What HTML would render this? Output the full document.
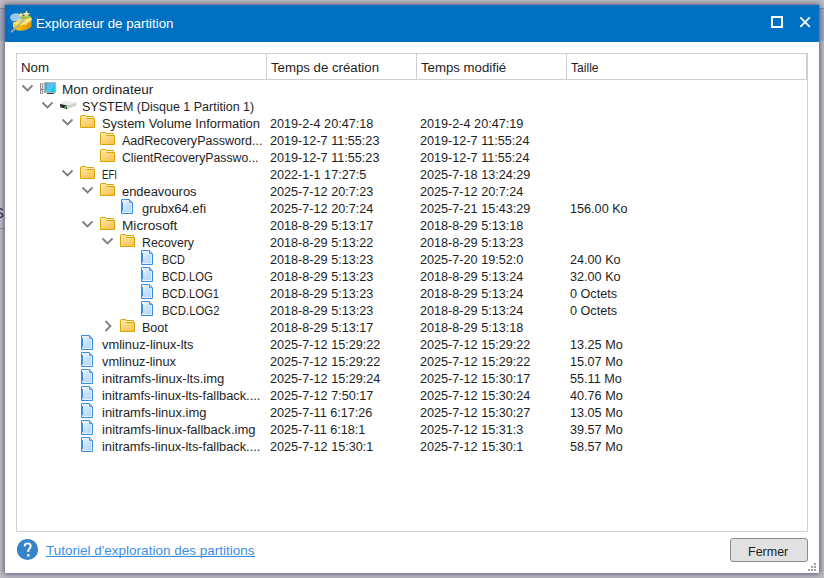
<!DOCTYPE html>
<html><head><meta charset="utf-8"><style>
html,body{margin:0;padding:0;}
body{width:824px;height:578px;position:relative;overflow:hidden;background:#bdbcc1;font-family:"Liberation Sans",sans-serif;}
.abs{position:absolute;}
.ic{position:absolute;display:block;}
.t{position:absolute;transform-origin:0 0;font-size:12.5px;line-height:17px;height:17px;white-space:pre;color:#1e1e1e;}
.n{font-size:12.65px;}
#win{position:absolute;left:5px;top:5px;width:814px;height:568px;background:#fff;box-shadow:0 0 5px 1px rgba(60,55,100,0.75);}
#title{position:absolute;left:5px;top:5px;width:814px;height:37px;background:#0071c2;}
#ttext{position:absolute;left:36px;top:15px;font-size:13.3px;line-height:17px;color:#fff;white-space:pre;}
.line{position:absolute;background:#cfcfcf;}
#link{position:absolute;left:46px;top:542px;font-size:13.5px;line-height:17px;color:#3d8ee4;white-space:pre;}
#uline{position:absolute;left:46px;top:556px;width:209px;height:1px;background:#3a8ae2;}
#btn{position:absolute;left:730px;top:538px;width:76px;height:22px;border:1px solid #8c8c8c;border-radius:3px;background:#e1e1e1;}
#btext{position:absolute;left:748px;top:544px;font-size:12.5px;line-height:17px;color:#1e1e1e;white-space:pre;}
</style></head><body>
<svg width="0" height="0" style="position:absolute">
<defs>
<linearGradient id="fg" x1="0" y1="0" x2="0.6" y2="1"><stop offset="0" stop-color="#ffecb0"/><stop offset="1" stop-color="#f9c455"/></linearGradient>
<linearGradient id="fl" x1="0" y1="0" x2="0.8" y2="1"><stop offset="0" stop-color="#ffffff"/><stop offset="0.5" stop-color="#c9e2fa"/><stop offset="1" stop-color="#b3d6f8"/></linearGradient>
<linearGradient id="scr" x1="0" y1="0" x2="1" y2="1"><stop offset="0" stop-color="#5a9fdc"/><stop offset="1" stop-color="#00d2fa"/></linearGradient>
<symbol id="folder" viewBox="0 0 15 13">
<path d="M0.5,12.5 V1.5 Q0.5,0.5 1.5,0.5 H5.5 L6.5,1.5 H13.5 V3.5 H14.5 V12.5 Z" fill="url(#fg)" stroke="#d9a300"/>
<rect x="7" y="2" width="6.5" height="1.2" fill="#fff2c8"/>
<path d="M6.5,3.5 H14" stroke="#d9a300" stroke-width="1"/>
</symbol>
<symbol id="file" viewBox="0 0 12 15">
<path d="M0.5,0.5 H8.3 L11.5,3.7 V14.5 H0.5 Z" fill="url(#fl)" stroke="#3a8ee0"/>
<path d="M2.3,1.6 H7.6 V4.4 H10.5 V13.5 H2.3" fill="none" stroke="#e6f5ff" stroke-width="0.9"/>
<path d="M1.5,3 V12" stroke="#3a8ee0" stroke-width="1"/>
<path d="M8.5,0.8 V3.6 H11.2" fill="none" stroke="#3a8ee0" stroke-width="0.9"/>
</symbol>
<symbol id="pc" viewBox="0 0 17 13">
<rect x="0" y="1" width="1" height="11" fill="#8e9196"/>
<rect x="1" y="1" width="1" height="11" fill="#d9dcdf"/>
<rect x="2" y="1" width="1" height="11" fill="#9fa3a8"/>
<rect x="3" y="1" width="1" height="11" fill="#dfe2e5"/>
<rect x="1" y="7" width="1" height="1" fill="#d05a4a"/>
<rect x="3" y="7" width="1" height="1" fill="#3ab8e0"/>
<rect x="4" y="0" width="12" height="11" fill="#b9b2a4"/>
<rect x="5" y="1" width="10" height="9" fill="url(#scr)"/>
<path d="M8,1 L15,1 L15,3 L10,10 L6,10 Z" fill="#ffffff" opacity="0.18"/>
<rect x="7" y="11" width="7" height="1" fill="#3f3f3f"/>
<rect x="5" y="10" width="1" height="1" fill="#8aea3c"/>
</symbol>
<symbol id="disk" viewBox="0 0 17 9">
<path d="M0,3 L4.7,0 L16.5,1.8 L16.5,4.6 L7,8 L0.3,6.2 Z" fill="#d0d0d0"/>
<path d="M0,3 L4.7,0 L16.5,1.8 L7,4.6 Z" fill="#ececec"/>
<path d="M0,3 L7,4.6 L7,8 L0.3,6.2 Z" fill="#262626"/>
<rect x="4.6" y="4.9" width="2" height="2" fill="#2ee33c"/>
</symbol>
</defs></svg>

<div class="abs" style="left:0;top:8px;width:824px;height:1px;background:#8d8c94"></div>
<div class="abs" style="left:0;top:9px;width:824px;height:32px;background:#a2abbd"></div>
<div class="abs" style="left:0;top:228px;width:5px;height:1px;background:#8a8a92"></div>
<div class="abs" style="left:-6px;top:204px;font-size:15px;line-height:17px;color:#2a2a3a">S</div>
<div id="win"></div>
<div id="title"></div>
<div id="ttext">Explorateur de partition</div>
<svg class="ic" style="left:0;top:0" width="40" height="40" viewBox="0 0 40 40">
<defs>
<linearGradient id="cy" x1="0" y1="0" x2="1" y2="0.3"><stop offset="0" stop-color="#ffe23a"/><stop offset="0.6" stop-color="#f2b800"/><stop offset="1" stop-color="#e09400"/></linearGradient>
<radialGradient id="st" cx="0.4" cy="0.4" r="0.7"><stop offset="0" stop-color="#fff6c0"/><stop offset="1" stop-color="#c9a020"/></radialGradient>
</defs>
<path d="M10.2,17.5 Q10,22 13.5,24 L14,18.5 Z" fill="#2f86d6"/>
<ellipse cx="16" cy="17.3" rx="5.9" ry="4" fill="#a6d2f3" opacity="0.9"/>
<path d="M21,16 L30,15.8 L31.6,18 L21.5,19.6 Z" fill="#6fd24a"/>
<path d="M13,23 L21.5,19.3 L31.6,17.8 V26.5 Q28.5,30.6 19.5,30.8 Q14.5,30 13,27 Z" fill="url(#cy)"/>
<path d="M13,23 L21.5,19.3 L31.6,17.8 L31.4,20.5 Q26,24.8 19,25.2 Q15,25 13,23 Z" fill="#ffe96a"/>
<path d="M21,11.9 L21.9,14.1 L24.2,14.3 L22.4,15.8 L23,18.1 L21,16.8 L19,18.1 L19.6,15.8 L17.8,14.3 L20.1,14.1 Z" fill="url(#st)"/>
<path d="M26.5,10.3 L27.7,13.1 L30.6,13.3 L28.4,15.1 L29.1,18 L26.5,16.4 L23.9,18 L24.6,15.1 L22.4,13.3 L25.3,13.1 Z" fill="url(#st)"/>
<path d="M19.2,17.9 L19.8,19.3 L21.3,19.4 L20.1,20.4 L20.5,21.9 L19.2,21.1 L17.9,21.9 L18.3,20.4 L17.1,19.4 L18.6,19.3 Z" fill="url(#st)"/>
<path d="M25.1,20.3 L25.9,22 L27.8,22.2 L26.4,23.4 L26.8,25.3 L25.1,24.3 L23.4,25.3 L23.8,23.4 L22.4,22.2 L24.3,22 Z" fill="#f6e08a"/><path d="M29.1,18.9 L29.6,20 L30.8,20.1 L29.9,20.9 L30.2,22.1 L29.1,21.4 L28,22.1 L28.3,20.9 L27.4,20.1 L28.6,20 Z" fill="#f6e08a"/>
<line x1="11.1" y1="32.4" x2="25.5" y2="18" stroke="#8a8a8a" stroke-width="1.7"/>
<line x1="11.3" y1="32" x2="25.2" y2="18.2" stroke="#f0f0f0" stroke-width="0.7"/>
</svg>
<svg class="ic" style="left:760px;top:8px" width="60" height="28" viewBox="760 8 60 28">
<rect x="772" y="17" width="10" height="10" fill="none" stroke="#fff" stroke-width="2"/>
<path d="M800.3,17.3 L809.8,26.8 M809.8,17.3 L800.3,26.8" stroke="#fff" stroke-width="1.7"/>
</svg>

<!-- table panel -->
<div class="line" style="left:16px;top:53px;width:792px;height:1px"></div>
<div class="line" style="left:16px;top:79px;width:791px;height:1px"></div>
<div class="line" style="left:16px;top:531px;width:792px;height:1px"></div>
<div class="line" style="left:16px;top:53px;width:1px;height:479px"></div>
<div class="line" style="left:807px;top:53px;width:1px;height:479px"></div>
<div class="line" style="left:266px;top:53px;width:1px;height:26px"></div>
<div class="line" style="left:416px;top:53px;width:1px;height:26px"></div>
<div class="line" style="left:566px;top:53px;width:1px;height:26px"></div>
<div class="line" style="left:806px;top:53px;width:1px;height:26px"></div>
<div class="t" style="left:21px;top:60px;transform:scaleX(1.0611);">Nom</div>
<div class="t" style="left:271px;top:60px;transform:scaleX(1.0574);">Temps de création</div>
<div class="t" style="left:421px;top:60px;transform:scaleX(1.0572);">Temps modifié</div>
<div class="t" style="left:571px;top:60px;transform:scaleX(0.9688);">Taille</div>

<svg class="ic" style="left:21px;top:84px" width="12" height="8" viewBox="0 0 12 8"><polyline points="1.5,1.5 6.5,6.5 11.5,1.5" fill="none" stroke="#7f7f7f" stroke-width="1.8"/></svg>
<svg class="ic" style="left:40px;top:82px" width="17" height="13" viewBox="0 0 17 13"><use href="#pc"/></svg>
<div class="t" style="left:62px;top:82px;transform:scaleX(1.0859);">Mon ordinateur</div>
<svg class="ic" style="left:41px;top:101px" width="12" height="8" viewBox="0 0 12 8"><polyline points="1.5,1.5 6.5,6.5 11.5,1.5" fill="none" stroke="#7f7f7f" stroke-width="1.8"/></svg>
<svg class="ic" style="left:60px;top:101px" width="17" height="9" viewBox="0 0 17 9"><use href="#disk"/></svg>
<div class="t" style="left:82px;top:99px;transform:scaleX(0.9995);">SYSTEM (Disque 1 Partition 1)</div>
<svg class="ic" style="left:61px;top:118px" width="12" height="8" viewBox="0 0 12 8"><polyline points="1.5,1.5 6.5,6.5 11.5,1.5" fill="none" stroke="#7f7f7f" stroke-width="1.8"/></svg>
<svg class="ic" style="left:80px;top:115px" width="15" height="13" viewBox="0 0 15 13"><use href="#folder"/></svg>
<div class="t" style="left:102px;top:116px;transform:scaleX(1.0337);">System Volume Information</div>
<div class="t n" style="left:270px;top:116px">2019-2-4 20:47:18</div>
<div class="t n" style="left:420px;top:116px">2019-2-4 20:47:19</div>
<svg class="ic" style="left:100px;top:132px" width="15" height="13" viewBox="0 0 15 13"><use href="#folder"/></svg>
<div class="t" style="left:122px;top:133px;transform:scaleX(1.0012);">AadRecoveryPassword...</div>
<div class="t n" style="left:270px;top:133px">2019-12-7 11:55:23</div>
<div class="t n" style="left:420px;top:133px">2019-12-7 11:55:24</div>
<svg class="ic" style="left:100px;top:149px" width="15" height="13" viewBox="0 0 15 13"><use href="#folder"/></svg>
<div class="t" style="left:122px;top:150px;transform:scaleX(0.9825);">ClientRecoveryPasswo...</div>
<div class="t n" style="left:270px;top:150px">2019-12-7 11:55:23</div>
<div class="t n" style="left:420px;top:150px">2019-12-7 11:55:24</div>
<svg class="ic" style="left:61px;top:169px" width="12" height="8" viewBox="0 0 12 8"><polyline points="1.5,1.5 6.5,6.5 11.5,1.5" fill="none" stroke="#7f7f7f" stroke-width="1.8"/></svg>
<svg class="ic" style="left:80px;top:166px" width="15" height="13" viewBox="0 0 15 13"><use href="#folder"/></svg>
<div class="t" style="left:102px;top:167px;transform:scaleX(0.7712);">EFI</div>
<div class="t n" style="left:270px;top:167px">2022-1-1 17:27:5</div>
<div class="t n" style="left:420px;top:167px">2025-7-18 13:24:29</div>
<svg class="ic" style="left:81px;top:186px" width="12" height="8" viewBox="0 0 12 8"><polyline points="1.5,1.5 6.5,6.5 11.5,1.5" fill="none" stroke="#7f7f7f" stroke-width="1.8"/></svg>
<svg class="ic" style="left:100px;top:183px" width="15" height="13" viewBox="0 0 15 13"><use href="#folder"/></svg>
<div class="t" style="left:122px;top:184px;transform:scaleX(1.0308);">endeavouros</div>
<div class="t n" style="left:270px;top:184px">2025-7-12 20:7:23</div>
<div class="t n" style="left:420px;top:184px">2025-7-12 20:7:24</div>
<svg class="ic" style="left:121px;top:199px" width="12" height="15" viewBox="0 0 12 15"><use href="#file"/></svg>
<div class="t" style="left:142px;top:201px;transform:scaleX(1.0348);">grubx64.efi</div>
<div class="t n" style="left:270px;top:201px">2025-7-12 20:7:24</div>
<div class="t n" style="left:420px;top:201px">2025-7-21 15:43:29</div>
<div class="t n" style="left:570px;top:201px">156.00 Ko</div>
<svg class="ic" style="left:81px;top:220px" width="12" height="8" viewBox="0 0 12 8"><polyline points="1.5,1.5 6.5,6.5 11.5,1.5" fill="none" stroke="#7f7f7f" stroke-width="1.8"/></svg>
<svg class="ic" style="left:100px;top:217px" width="15" height="13" viewBox="0 0 15 13"><use href="#folder"/></svg>
<div class="t" style="left:122px;top:218px;transform:scaleX(1.0907);">Microsoft</div>
<div class="t n" style="left:270px;top:218px">2018-8-29 5:13:17</div>
<div class="t n" style="left:420px;top:218px">2018-8-29 5:13:18</div>
<svg class="ic" style="left:101px;top:237px" width="12" height="8" viewBox="0 0 12 8"><polyline points="1.5,1.5 6.5,6.5 11.5,1.5" fill="none" stroke="#7f7f7f" stroke-width="1.8"/></svg>
<svg class="ic" style="left:120px;top:234px" width="15" height="13" viewBox="0 0 15 13"><use href="#folder"/></svg>
<div class="t" style="left:142px;top:235px;transform:scaleX(0.9848);">Recovery</div>
<div class="t n" style="left:270px;top:235px">2018-8-29 5:13:22</div>
<div class="t n" style="left:420px;top:235px">2018-8-29 5:13:23</div>
<svg class="ic" style="left:141px;top:250px" width="12" height="15" viewBox="0 0 12 15"><use href="#file"/></svg>
<div class="t" style="left:162px;top:252px;transform:scaleX(0.8678);">BCD</div>
<div class="t n" style="left:270px;top:252px">2018-8-29 5:13:23</div>
<div class="t n" style="left:420px;top:252px">2025-7-20 19:52:0</div>
<div class="t n" style="left:570px;top:252px">24.00 Ko</div>
<svg class="ic" style="left:141px;top:267px" width="12" height="15" viewBox="0 0 12 15"><use href="#file"/></svg>
<div class="t" style="left:162px;top:269px;transform:scaleX(0.9029);">BCD.LOG</div>
<div class="t n" style="left:270px;top:269px">2018-8-29 5:13:23</div>
<div class="t n" style="left:420px;top:269px">2018-8-29 5:13:24</div>
<div class="t n" style="left:570px;top:269px">32.00 Ko</div>
<svg class="ic" style="left:141px;top:284px" width="12" height="15" viewBox="0 0 12 15"><use href="#file"/></svg>
<div class="t" style="left:162px;top:286px;transform:scaleX(0.9017);">BCD.LOG1</div>
<div class="t n" style="left:270px;top:286px">2018-8-29 5:13:23</div>
<div class="t n" style="left:420px;top:286px">2018-8-29 5:13:24</div>
<div class="t n" style="left:570px;top:286px">0 Octets</div>
<svg class="ic" style="left:141px;top:301px" width="12" height="15" viewBox="0 0 12 15"><use href="#file"/></svg>
<div class="t" style="left:162px;top:303px;transform:scaleX(0.9096);">BCD.LOG2</div>
<div class="t n" style="left:270px;top:303px">2018-8-29 5:13:23</div>
<div class="t n" style="left:420px;top:303px">2018-8-29 5:13:24</div>
<div class="t n" style="left:570px;top:303px">0 Octets</div>
<svg class="ic" style="left:104px;top:320px" width="8" height="12" viewBox="0 0 8 12"><polyline points="1.5,1 6.5,6 1.5,11" fill="none" stroke="#7f7f7f" stroke-width="1.8"/></svg>
<svg class="ic" style="left:120px;top:319px" width="15" height="13" viewBox="0 0 15 13"><use href="#folder"/></svg>
<div class="t" style="left:142px;top:320px;transform:scaleX(1.0034);">Boot</div>
<div class="t n" style="left:270px;top:320px">2018-8-29 5:13:17</div>
<div class="t n" style="left:420px;top:320px">2018-8-29 5:13:18</div>
<svg class="ic" style="left:81px;top:335px" width="12" height="15" viewBox="0 0 12 15"><use href="#file"/></svg>
<div class="t" style="left:102px;top:337px;transform:scaleX(1.0292);">vmlinuz-linux-lts</div>
<div class="t n" style="left:270px;top:337px">2025-7-12 15:29:22</div>
<div class="t n" style="left:420px;top:337px">2025-7-12 15:29:22</div>
<div class="t n" style="left:570px;top:337px">13.25 Mo</div>
<svg class="ic" style="left:81px;top:352px" width="12" height="15" viewBox="0 0 12 15"><use href="#file"/></svg>
<div class="t" style="left:102px;top:354px;transform:scaleX(1.0244);">vmlinuz-linux</div>
<div class="t n" style="left:270px;top:354px">2025-7-12 15:29:22</div>
<div class="t n" style="left:420px;top:354px">2025-7-12 15:29:22</div>
<div class="t n" style="left:570px;top:354px">15.07 Mo</div>
<svg class="ic" style="left:81px;top:369px" width="12" height="15" viewBox="0 0 12 15"><use href="#file"/></svg>
<div class="t" style="left:102px;top:371px;transform:scaleX(1.0420);">initramfs-linux-lts.img</div>
<div class="t n" style="left:270px;top:371px">2025-7-12 15:29:24</div>
<div class="t n" style="left:420px;top:371px">2025-7-12 15:30:17</div>
<div class="t n" style="left:570px;top:371px">55.11 Mo</div>
<svg class="ic" style="left:81px;top:386px" width="12" height="15" viewBox="0 0 12 15"><use href="#file"/></svg>
<div class="t" style="left:102px;top:388px;transform:scaleX(1.0272);">initramfs-linux-lts-fallback....</div>
<div class="t n" style="left:270px;top:388px">2025-7-12 7:50:17</div>
<div class="t n" style="left:420px;top:388px">2025-7-12 15:30:24</div>
<div class="t n" style="left:570px;top:388px">40.76 Mo</div>
<svg class="ic" style="left:81px;top:403px" width="12" height="15" viewBox="0 0 12 15"><use href="#file"/></svg>
<div class="t" style="left:102px;top:405px;transform:scaleX(1.0366);">initramfs-linux.img</div>
<div class="t n" style="left:270px;top:405px">2025-7-11 6:17:26</div>
<div class="t n" style="left:420px;top:405px">2025-7-12 15:30:27</div>
<div class="t n" style="left:570px;top:405px">13.05 Mo</div>
<svg class="ic" style="left:81px;top:420px" width="12" height="15" viewBox="0 0 12 15"><use href="#file"/></svg>
<div class="t" style="left:102px;top:422px;transform:scaleX(1.0424);">initramfs-linux-fallback.img</div>
<div class="t n" style="left:270px;top:422px">2025-7-11 6:18:1</div>
<div class="t n" style="left:420px;top:422px">2025-7-12 15:31:3</div>
<div class="t n" style="left:570px;top:422px">39.57 Mo</div>
<svg class="ic" style="left:81px;top:437px" width="12" height="15" viewBox="0 0 12 15"><use href="#file"/></svg>
<div class="t" style="left:102px;top:439px;transform:scaleX(1.0272);">initramfs-linux-lts-fallback....</div>
<div class="t n" style="left:270px;top:439px">2025-7-12 15:30:1</div>
<div class="t n" style="left:420px;top:439px">2025-7-12 15:30:1</div>
<div class="t n" style="left:570px;top:439px">58.57 Mo</div>

<!-- footer -->
<svg class="ic" style="left:16px;top:538px" width="23" height="23" viewBox="0 0 23 23"><circle cx="11.5" cy="11.5" r="10.6" fill="#3583c8"/><path d="M8.6,8.6 C8.6,6.4 9.9,5.4 11.6,5.4 C13.4,5.4 14.7,6.5 14.7,8.2 C14.7,10.3 12.3,10.6 12.3,12.6 V14" fill="none" stroke="#fff" stroke-width="1.9"/><rect x="11.2" y="16.2" width="2.2" height="2.3" fill="#fff"/></svg>
<div id="link">Tutoriel d'exploration des partitions</div>
<div id="uline"></div>
<div id="btn"></div>
<div id="btext">Fermer</div>
<div class="abs" style="left:814px;top:563px;width:2px;height:2px;background:#a0a0a0"></div>
<div class="abs" style="left:811px;top:566px;width:2px;height:2px;background:#a0a0a0"></div>
<div class="abs" style="left:814px;top:566px;width:2px;height:2px;background:#a0a0a0"></div>
<div class="abs" style="left:808px;top:569px;width:2px;height:2px;background:#a0a0a0"></div>
<div class="abs" style="left:811px;top:569px;width:2px;height:2px;background:#a0a0a0"></div>
<div class="abs" style="left:814px;top:569px;width:2px;height:2px;background:#a0a0a0"></div>
</body></html>
